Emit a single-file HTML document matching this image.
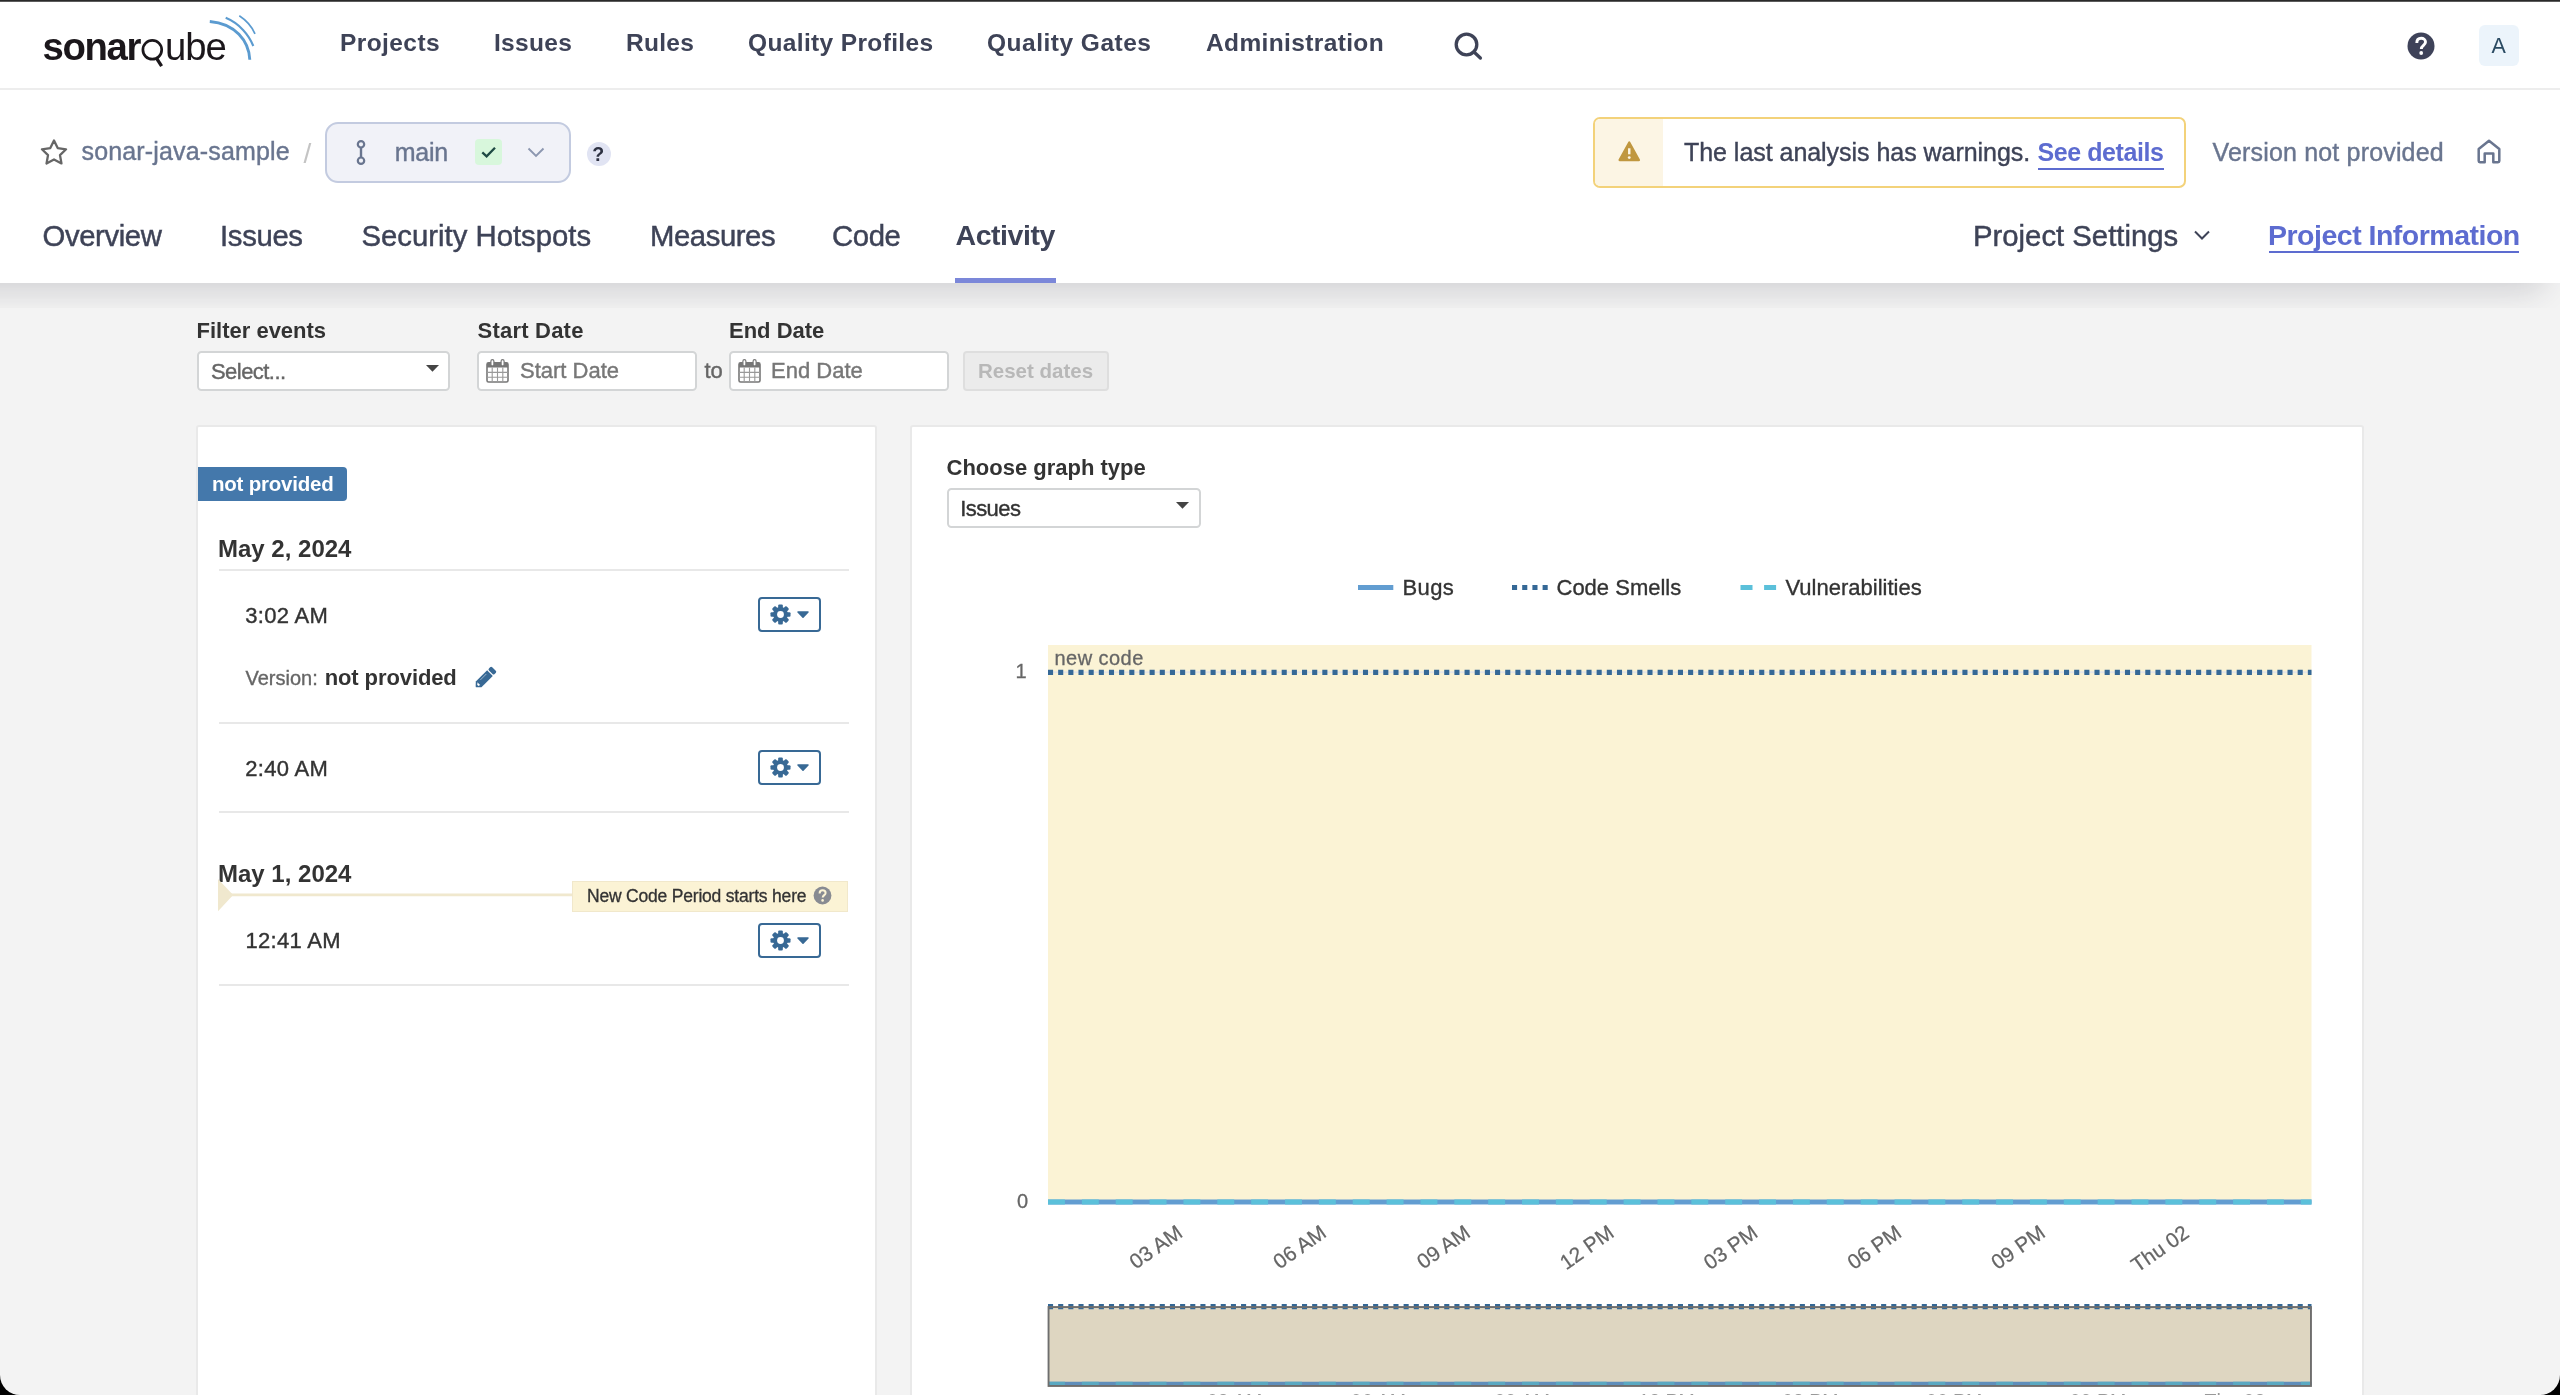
<!DOCTYPE html>
<html lang="en">
<head>
<meta charset="utf-8">
<title>Activity - sonar-java-sample</title>
<style>
*{box-sizing:border-box;margin:0;padding:0}
html{background:#000;width:2560px;height:1395px;overflow:hidden}
body{width:2560px;height:1395px;position:relative;overflow:hidden;background:#f3f3f3;border-radius:0 0 20px 20px;font-family:"Liberation Sans",sans-serif;color:#333;}
.abs{position:absolute;white-space:nowrap;line-height:1}
.t{position:absolute;white-space:nowrap;line-height:1}
/* top chrome line */
#topline{position:absolute;left:0;top:0;width:2560px;height:2px;background:linear-gradient(#2a2a2a 0,#2a2a2a 1px,#8e8e8e 2px);z-index:30}
/* global nav */
#gnav{position:absolute;left:0;top:0;width:2560px;height:88px;background:#fff;z-index:20}
#gnavb{position:absolute;left:0;top:88px;width:2560px;height:2px;background:#ededed;z-index:20}
.nv{font-weight:bold;font-size:24.5px;color:#3e4357;top:30.5px;letter-spacing:.3px}
/* project header */
#phead{position:absolute;left:0;top:90px;width:2560px;height:193px;background:#fff;z-index:10}
#pshadow{position:absolute;left:0;top:283px;width:2560px;height:25px;overflow:hidden;z-index:9}
#pshadow i{position:absolute;left:-60px;top:-60px;width:2599px;height:60px;background:#fff;box-shadow:0 2px 30px 7px rgba(40,40,60,.165);border-radius:0 0 12px 0}
.in{font-size:25px;color:#3e4357;-webkit-text-stroke:.4px}
.tab{font-size:29.3px;color:#3e4357;top:221px;-webkit-text-stroke:.45px}

/* legacy content */
.lbl{font-weight:bold;font-size:22px;color:#333}
.sel{position:absolute;background:#fff;border:2px solid #d3d5d6;border-radius:4.5px}
.tx{font-size:22px;-webkit-text-stroke:.4px}
.panel{position:absolute;background:#fff;border:2px solid #e9e9e9;border-radius:3px}
.hr{position:absolute;height:2px;background:#e8e8e8}
.gbtn{position:absolute;width:63px;height:35px;border:2px solid #386995;border-radius:4px;background:#fff}
.day{font-weight:bold;font-size:24px;color:#333}
</style>
</head>
<body><div id="root" style="position:absolute;left:0;top:0;width:2560px;height:1395px;overflow:hidden;will-change:transform">
<div id="topline"></div>
<div id="gnav">
  <svg class="abs" id="logo" style="left:40px;top:10px" width="222" height="64" viewBox="0 0 222 64">
    <text x="2.6" y="50" font-family="Liberation Sans, sans-serif" font-weight="bold" font-size="38.3" letter-spacing="-1.4" fill="#1b171b">sonar</text>
    <circle cx="112.3" cy="39.8" r="9.4" fill="none" stroke="#1b171b" stroke-width="2.7"/>
    <path d="M116.6 48.4 L121.6 56.2" stroke="#1b171b" stroke-width="3.3" fill="none"/>
    <text x="125" y="50" font-family="Liberation Sans, sans-serif" font-size="38.3" letter-spacing="-1.0" fill="#1b171b">ube</text>
    <path d="M169.8 11.5 C195 13.5 209 31 209.8 49.8" fill="none" stroke="#5b9bd0" stroke-width="2.9"/>
    <path d="M185.7 7.8 C199.5 13.5 209 25 213.3 36" fill="none" stroke="#5b9bd0" stroke-width="2.1"/>
    <path d="M199.3 5.8 C206.5 10.5 212 17 215 23.8" fill="none" stroke="#5b9bd0" stroke-width="1.7"/>
  </svg>
  <span class="t nv" id="n1" style="left:340px;letter-spacing:.42px">Projects</span>
  <span class="t nv" id="n2" style="left:494px">Issues</span>
  <span class="t nv" id="n3" style="left:626px">Rules</span>
  <span class="t nv" id="n4" style="left:748px;letter-spacing:.36px">Quality Profiles</span>
  <span class="t nv" id="n5" style="left:987px;letter-spacing:.5px">Quality Gates</span>
  <span class="t nv" id="n6" style="left:1206px;letter-spacing:.37px">Administration</span>
  <svg class="abs" id="search" style="left:1450px;top:28px" width="36" height="36" viewBox="0 0 36 36"><circle cx="16.5" cy="16.5" r="10.3" fill="none" stroke="#3e4357" stroke-width="3.3"/><path d="M24 24 L30.4 30" stroke="#3e4357" stroke-width="3.3" stroke-linecap="round"/></svg>
  <svg class="abs" id="ghelp" style="left:2407.3px;top:31.6px" width="28" height="28" viewBox="0 0 28 28"><circle cx="14" cy="14" r="13.5" fill="#3e4259"/><path d="M9.8 11 C9.8 7.6 12 6.3 14.2 6.3 C16.6 6.3 18.5 7.8 18.5 10 C18.5 13.3 14.3 13.4 14.3 17" fill="none" stroke="#fff" stroke-width="2.9"/><circle cx="14.2" cy="21" r="1.9" fill="#fff"/></svg>
  <div class="abs" id="avatar" style="left:2479px;top:25px;width:40px;height:41px;border-radius:6px;background:#ecf4fb"></div>
  <span class="t" id="avA" style="left:2491.5px;top:36.3px;font-size:21.5px;color:#2a4a62">A</span>
</div>
<div id="gnavb"></div>

<div id="phead">
  <svg class="abs" id="star" style="left:38px;top:46px" width="32" height="32" viewBox="0 0 32 32"><path d="M16.00 4.50 L19.70 12.10 L28.08 13.28 L21.99 19.15 L23.46 27.47 L16.00 23.50 L8.54 27.47 L10.01 19.15 L3.92 13.28 L12.30 12.10 Z" fill="none" stroke="#666" stroke-width="2.3" stroke-linejoin="round"/></svg>
  <span class="t in" id="pname" style="left:81.5px;top:48.5px;color:#69758f;letter-spacing:.16px">sonar-java-sample</span>
  <span class="t" id="slash" style="left:303.5px;top:49.5px;font-size:28px;color:#c4c4c4">/</span>
  <div class="abs" id="branch" style="left:325px;top:32px;width:246px;height:61px;border:2px solid #c3cbe0;border-radius:13px;background:#f1f2f8"></div>
  <svg class="abs" id="bricon" style="left:353px;top:48px" width="16" height="30" viewBox="0 0 16 30"><circle cx="8" cy="6.3" r="3.2" fill="none" stroke="#69758f" stroke-width="2.2"/><circle cx="8" cy="22.7" r="3.2" fill="none" stroke="#69758f" stroke-width="2.2"/><path d="M8 9.5 V19.5" stroke="#69758f" stroke-width="2.4"/></svg>
  <span class="t in" id="bname" style="left:394.8px;top:49.5px;color:#69758f;letter-spacing:-.3px">main</span>
  <div class="abs" id="qg" style="left:475px;top:49px;width:27px;height:26px;border-radius:4px;background:#d8f7dc"></div>
  <svg class="abs" id="qgc" style="left:475px;top:49px" width="27" height="26" viewBox="0 0 27 26"><path d="M7.3 13.4 L11.6 17.4 L20 8.8" fill="none" stroke="#1f4a44" stroke-width="2.3"/></svg>
  <svg class="abs" id="brchev" style="left:526px;top:55px" width="20" height="14" viewBox="0 0 20 14"><path d="M2.5 3.5 L10 11 L17.5 3.5" fill="none" stroke="#8c97b0" stroke-width="1.9"/></svg>
  <div class="abs" id="bhelp" style="left:586.5px;top:52px;width:24px;height:24px;border-radius:12px;background:#e1e4f3"></div>
  <span class="t" id="bhelpq" style="left:592.3px;top:54.8px;font-size:19.5px;font-weight:bold;color:#2d3142">?</span>

  <div class="abs" id="warn" style="left:1593px;top:27px;width:593px;height:71px;border:2px solid #f3d27a;border-radius:7px;background:#fff;overflow:hidden"><div style="position:absolute;left:0;top:0;width:67.5px;height:67px;background:#fcf5e4"></div></div>
  <svg class="abs" id="warnic" style="left:1616.6px;top:50.4px" width="24.5" height="23.5" viewBox="0 0 26 25"><path d="M13 2.6 L23.3 21.4 H2.7 Z" fill="#c0973f" stroke="#c0973f" stroke-width="2.4" stroke-linejoin="round"/><path d="M13 8.8 V15.2" stroke="#fcf5e4" stroke-width="2.6"/><circle cx="13" cy="18.7" r="1.5" fill="#fcf5e4"/></svg>
  <span class="t in" id="wtext" style="left:1684px;top:49.5px;letter-spacing:-.04px">The last analysis has warnings.</span>
  <span class="t in" id="wlink" style="left:2037.5px;top:49.5px;font-weight:bold;-webkit-text-stroke:0;color:#5d6cd0;letter-spacing:-.42px">See details</span>
  <div class="abs" id="wul" style="left:2038px;top:78px;width:126px;height:2px;background:#5d6cd0"></div>
  <span class="t in" id="ver" style="left:2212.5px;top:49.5px;color:#69758f;letter-spacing:.17px">Version not provided</span>
  <svg class="abs" id="home" style="left:2474px;top:47px" width="30" height="30" viewBox="0 0 30 30"><path d="M4.7 12 L15 3.7 L25.3 12 V24 a1.2 1.2 0 0 1 -1.2 1.2 H19.3 V16.5 H10.7 V25.2 H5.9 a1.2 1.2 0 0 1 -1.2 -1.2 Z" fill="none" stroke="#69758f" stroke-width="2.5" stroke-linejoin="round"/></svg>

  <span class="t tab" id="t1" style="left:42.5px;top:130.5px;letter-spacing:-.4px">Overview</span>
  <span class="t tab" id="t2" style="left:220px;top:130.5px;letter-spacing:-.33px">Issues</span>
  <span class="t tab" id="t3" style="left:361.5px;top:130.5px;letter-spacing:0px">Security Hotspots</span>
  <span class="t tab" id="t4" style="left:650px;top:130.5px;letter-spacing:-.44px">Measures</span>
  <span class="t tab" id="t5" style="left:832px;top:130.5px;letter-spacing:-.38px">Code</span>
  <span class="t tab" id="t6" style="left:955.5px;top:131px;font-weight:bold;-webkit-text-stroke:0;letter-spacing:-.45px;font-size:28.5px">Activity</span>
  <div class="abs" id="tabul" style="left:955px;top:188px;width:101px;height:5px;background:#7b87d9"></div>
  <span class="t tab" id="t7" style="left:1973px;top:130.5px;letter-spacing:0px">Project Settings</span>
  <svg class="abs" id="pschev" style="left:2191.7px;top:138px" width="20" height="14" viewBox="0 0 20 14"><path d="M3 3.5 L10 10.5 L17 3.5" fill="none" stroke="#3e4357" stroke-width="2"/></svg>
  <span class="t tab" id="t8" style="left:2268px;top:131px;font-weight:bold;-webkit-text-stroke:0;color:#5d6cd0;letter-spacing:-.5px;font-size:28.5px">Project Information</span>
  <div class="abs" id="piul" style="left:2269px;top:161px;width:250px;height:2px;background:#5d6cd0"></div>
</div>
<div id="pshadow"><i></i></div>

<div id="content">
  <span class="t lbl" id="l1" style="left:196.5px;top:319.5px">Filter events</span>
  <span class="t lbl" id="l2" style="left:477.5px;top:319.5px;letter-spacing:.22px">Start Date</span>
  <span class="t lbl" id="l3" style="left:729px;top:319.5px">End Date</span>
  <div class="sel" id="s1" style="left:197px;top:351px;width:253px;height:40px"><span class="t tx" id="s1t" style="left:12px;top:8px;color:#666;letter-spacing:-.55px">Select...</span><svg class="abs" style="left:225.6px;top:11.3px" width="15" height="8.4" viewBox="0 0 16 9"><path d="M1 1 H15 L8 8.4 Z" fill="#444"/></svg></div>
  <div class="sel" id="d1" style="left:477px;top:351px;width:220px;height:40px"><svg class="abs" style="left:7px;top:6px" width="23" height="24" viewBox="0 0 23 24"><rect x="1" y="3.8" width="21" height="19.2" rx="1.6" fill="#fff" stroke="#777" stroke-width="1.6"/><path d="M1 5.2 Q1 3.8 2.6 3.8 H20.4 Q22 3.8 22 5.2 V8.6 H1 Z" fill="#777"/><path d="M6.2 8.6 V23 M11.5 8.6 V23 M16.8 8.6 V23 M1 13.4 H22 M1 18.2 H22" stroke="#999" stroke-width="1.1"/><rect x="4.9" y="0.7" width="3" height="6.2" rx="1.5" fill="#fff" stroke="#777" stroke-width="1.2"/><rect x="15.1" y="0.7" width="3" height="6.2" rx="1.5" fill="#fff" stroke="#777" stroke-width="1.2"/></svg><span class="t tx" id="d1t" style="left:41px;top:7px;color:#777">Start Date</span></div>
  <span class="t tx" id="to" style="left:704.5px;top:360px;color:#666">to</span>
  <div class="sel" id="d2" style="left:729px;top:351px;width:220px;height:40px"><svg class="abs" style="left:7px;top:6px" width="23" height="24" viewBox="0 0 23 24"><rect x="1" y="3.8" width="21" height="19.2" rx="1.6" fill="#fff" stroke="#777" stroke-width="1.6"/><path d="M1 5.2 Q1 3.8 2.6 3.8 H20.4 Q22 3.8 22 5.2 V8.6 H1 Z" fill="#777"/><path d="M6.2 8.6 V23 M11.5 8.6 V23 M16.8 8.6 V23 M1 13.4 H22 M1 18.2 H22" stroke="#999" stroke-width="1.1"/><rect x="4.9" y="0.7" width="3" height="6.2" rx="1.5" fill="#fff" stroke="#777" stroke-width="1.2"/><rect x="15.1" y="0.7" width="3" height="6.2" rx="1.5" fill="#fff" stroke="#777" stroke-width="1.2"/></svg><span class="t tx" id="d2t" style="left:40px;top:7px;color:#777">End Date</span></div>
  <div class="abs" id="reset" style="left:963px;top:351px;width:146px;height:40px;border:2px solid #dedede;border-radius:4px;background:#ebebeb"><span class="t" id="resett" style="left:13px;top:7.9px;font-size:20.5px;font-weight:bold;color:#b8b8b8">Reset dates</span></div>

  <div class="panel" id="lp" style="left:196px;top:425px;width:681px;height:1000px">
    <div class="abs" id="badge" style="left:0;top:40px;width:149px;height:34px;background:#4478ab;border-radius:0 4px 4px 0"><span class="t" id="badget" style="left:14px;top:6.7px;letter-spacing:-.22px;font-size:20.5px;font-weight:bold;color:#fff">not provided</span></div>
    <span class="t day" id="day1" style="left:20px;top:109.7px">May 2, 2024</span>
    <div class="hr" style="left:21px;top:141.5px;width:630px"></div>
    <span class="t tx" id="tm1" style="left:47.3px;top:178.2px;letter-spacing:.3px">3:02 AM</span>
    <div class="gbtn" id="g1" style="left:560px;top:170px"><svg class="abs" style="left:10px;top:5.3px" width="21" height="21" viewBox="0 0 22 22"><g fill="#386995"><circle cx="11" cy="11" r="7.75"/><rect x="8.55" y="0.5" width="4.9" height="5.2" rx="1.2" transform="rotate(0 11 11)"/><rect x="8.55" y="0.5" width="4.9" height="5.2" rx="1.2" transform="rotate(45 11 11)"/><rect x="8.55" y="0.5" width="4.9" height="5.2" rx="1.2" transform="rotate(90 11 11)"/><rect x="8.55" y="0.5" width="4.9" height="5.2" rx="1.2" transform="rotate(135 11 11)"/><rect x="8.55" y="0.5" width="4.9" height="5.2" rx="1.2" transform="rotate(180 11 11)"/><rect x="8.55" y="0.5" width="4.9" height="5.2" rx="1.2" transform="rotate(225 11 11)"/><rect x="8.55" y="0.5" width="4.9" height="5.2" rx="1.2" transform="rotate(270 11 11)"/><rect x="8.55" y="0.5" width="4.9" height="5.2" rx="1.2" transform="rotate(315 11 11)"/></g><circle cx="11" cy="11" r="3.55" fill="#fff"/></svg><svg class="abs" style="left:36.3px;top:10.9px" width="14" height="10" viewBox="0 0 14 10"><path d="M2 2 H12 L7 7.3 Z" fill="#386995" stroke="#386995" stroke-width="1.5" stroke-linejoin="round"/></svg></div>
    <span class="t" id="vl" style="left:47.5px;top:241px;font-size:20px;color:#666;-webkit-text-stroke:.35px">Version:</span>
    <span class="t" id="vv" style="left:126.7px;top:239.5px;letter-spacing:-.1px;font-size:22px;font-weight:bold;color:#333">not provided</span>
    <svg class="abs" id="pencil" style="left:275.3px;top:239.4px" width="24" height="24" viewBox="0 0 24 24"><g transform="rotate(45 12 12)"><rect x="8" y="-0.7" width="8" height="4.6" rx="1.5" fill="#386995"/><path d="M8 5 H16 V21 L12.6 24.6 Q12 25.2 11.4 24.6 L8 21 Z" fill="#386995"/><path d="M9.5 20.4 H13.6 L12.9 22.3 H11.2 L10.6 21.3 Z" fill="#fff"/><path d="M10.1 8.2 V16.6" stroke="#fff" stroke-width=".8" opacity=".6"/></g></svg>
    <div class="hr" style="left:21px;top:294.5px;width:630px"></div>
    <span class="t tx" id="tm2" style="left:47.3px;top:331.4px;letter-spacing:.3px">2:40 AM</span>
    <div class="gbtn" id="g2" style="left:560px;top:323px"><svg class="abs" style="left:10px;top:5.3px" width="21" height="21" viewBox="0 0 22 22"><g fill="#386995"><circle cx="11" cy="11" r="7.75"/><rect x="8.55" y="0.5" width="4.9" height="5.2" rx="1.2" transform="rotate(0 11 11)"/><rect x="8.55" y="0.5" width="4.9" height="5.2" rx="1.2" transform="rotate(45 11 11)"/><rect x="8.55" y="0.5" width="4.9" height="5.2" rx="1.2" transform="rotate(90 11 11)"/><rect x="8.55" y="0.5" width="4.9" height="5.2" rx="1.2" transform="rotate(135 11 11)"/><rect x="8.55" y="0.5" width="4.9" height="5.2" rx="1.2" transform="rotate(180 11 11)"/><rect x="8.55" y="0.5" width="4.9" height="5.2" rx="1.2" transform="rotate(225 11 11)"/><rect x="8.55" y="0.5" width="4.9" height="5.2" rx="1.2" transform="rotate(270 11 11)"/><rect x="8.55" y="0.5" width="4.9" height="5.2" rx="1.2" transform="rotate(315 11 11)"/></g><circle cx="11" cy="11" r="3.55" fill="#fff"/></svg><svg class="abs" style="left:36.3px;top:10.9px" width="14" height="10" viewBox="0 0 14 10"><path d="M2 2 H12 L7 7.3 Z" fill="#386995" stroke="#386995" stroke-width="1.5" stroke-linejoin="round"/></svg></div>
    <div class="hr" style="left:21px;top:384px;width:630px"></div>
    <span class="t day" id="day2" style="left:20px;top:434.7px">May 1, 2024</span>
    <svg class="abs" id="ncp" style="left:20.4px;top:452.4px" width="356" height="33" viewBox="0 0 356 33"><path d="M0 0 L15.2 15.9 L0 32.2 Z" fill="#f0e8ce"/><path d="M13 15.9 H356" stroke="#f0e8ce" stroke-width="2.8"/></svg>
    <div class="abs" id="ncpl" style="left:374px;top:454px;width:276px;height:31px;background:#fbf3d5;border:1px solid #f1e8cb"><span class="t" id="ncpt" style="left:14px;top:5.6px;font-size:17.5px;color:#333;-webkit-text-stroke:.3px;letter-spacing:-.2px">New Code Period starts here</span><svg class="abs" style="left:240.2px;top:4.3px" width="19" height="19" viewBox="0 0 19 19"><circle cx="9.5" cy="9.5" r="8.9" fill="#888b92"/><path d="M6.6 7.5 C6.6 5.2 8.1 4.3 9.6 4.3 C11.3 4.3 12.6 5.3 12.6 6.9 C12.6 9.1 9.7 9.2 9.7 11.6" fill="none" stroke="#fbf3d5" stroke-width="2"/><circle cx="9.6" cy="14.4" r="1.3" fill="#fbf3d5"/></svg></div>
    <span class="t tx" id="tm3" style="left:47.5px;top:503.4px;letter-spacing:.3px">12:41 AM</span>
    <div class="gbtn" id="g3" style="left:560px;top:496px"><svg class="abs" style="left:10px;top:5.3px" width="21" height="21" viewBox="0 0 22 22"><g fill="#386995"><circle cx="11" cy="11" r="7.75"/><rect x="8.55" y="0.5" width="4.9" height="5.2" rx="1.2" transform="rotate(0 11 11)"/><rect x="8.55" y="0.5" width="4.9" height="5.2" rx="1.2" transform="rotate(45 11 11)"/><rect x="8.55" y="0.5" width="4.9" height="5.2" rx="1.2" transform="rotate(90 11 11)"/><rect x="8.55" y="0.5" width="4.9" height="5.2" rx="1.2" transform="rotate(135 11 11)"/><rect x="8.55" y="0.5" width="4.9" height="5.2" rx="1.2" transform="rotate(180 11 11)"/><rect x="8.55" y="0.5" width="4.9" height="5.2" rx="1.2" transform="rotate(225 11 11)"/><rect x="8.55" y="0.5" width="4.9" height="5.2" rx="1.2" transform="rotate(270 11 11)"/><rect x="8.55" y="0.5" width="4.9" height="5.2" rx="1.2" transform="rotate(315 11 11)"/></g><circle cx="11" cy="11" r="3.55" fill="#fff"/></svg><svg class="abs" style="left:36.3px;top:10.9px" width="14" height="10" viewBox="0 0 14 10"><path d="M2 2 H12 L7 7.3 Z" fill="#386995" stroke="#386995" stroke-width="1.5" stroke-linejoin="round"/></svg></div>
    <div class="hr" style="left:21px;top:557px;width:630px"></div>
  </div>

  <div class="panel" id="rp" style="left:910px;top:425px;width:1454px;height:1000px">
    <span class="t lbl" id="cg" style="left:34.5px;top:29.5px">Choose graph type</span>
    <div class="sel" id="s2" style="left:35px;top:61px;width:254px;height:40px"><span class="t tx" id="s2t" style="left:11.3px;top:8px;color:#333;letter-spacing:-.6px">Issues</span><svg class="abs" style="left:226.4px;top:11.2px" width="15" height="8.4" viewBox="0 0 16 9"><path d="M1 1 H15 L8 8.4 Z" fill="#444"/></svg></div>
  </div>
</div>

<svg class="abs" id="chart" style="left:0;top:0;z-index:5" width="2560" height="1395" viewBox="0 0 2560 1395" font-family="Liberation Sans, sans-serif">
  <!-- legend -->
  <rect x="1358" y="585" width="35.3" height="5" fill="#629dd1"/>
  <path d="M1512 587.5 H1548" stroke="#356896" stroke-width="5" stroke-dasharray="5.1 5.1"/>
  <path d="M1740.5 587.5 H1776.2" stroke="#5bc0da" stroke-width="5" stroke-dasharray="12 11.6"/>
  <g font-size="22" fill="#333" stroke="#333" stroke-width=".35"><text id="lg1" x="1402.5" y="594.5" letter-spacing=".4">Bugs</text><text id="lg2" x="1556.5" y="594.5">Code Smells</text><text id="lg3" x="1785.5" y="594.5">Vulnerabilities</text></g>
  <!-- plot -->
  <rect x="1048" y="645" width="1263.5" height="555" fill="#fbf3d5"/>
  <path d="M1048 672.3 H2311.5 M1048 1202 H2311.5" stroke="#e6e6e6" stroke-width="2"/>
  <text id="nc" x="1054.5" y="665.2" font-size="20" fill="#666" stroke="#666" stroke-width=".3" letter-spacing=".45">new code</text>
  <path d="M1048 672.3 H2311.5" stroke="#356896" stroke-width="5.2" stroke-dasharray="5.08 5.08"/>
  <path d="M1048 1202 H2311.5" stroke="#629dd1" stroke-width="5.2"/>
  <path d="M1048 1202 H2311.5" stroke="#5bc0da" stroke-width="5.2" stroke-dasharray="16.93 16.93"/>
  <g font-size="20" fill="#666" stroke="#666" stroke-width=".3" text-anchor="end"><text id="y1" x="1026.6" y="677.8">1</text><text id="y0" x="1028" y="1208">0</text></g>
  <g font-size="20.8" fill="#666" stroke="#666" stroke-width=".25" id="xl"><text x="1184.0" y="1235.9" text-anchor="end" transform="rotate(-35 1184.0 1235.9)">03 AM</text><text x="1327.8" y="1235.9" text-anchor="end" transform="rotate(-35 1327.8 1235.9)">06 AM</text><text x="1471.6" y="1235.9" text-anchor="end" transform="rotate(-35 1471.6 1235.9)">09 AM</text><text x="1615.4" y="1235.9" text-anchor="end" transform="rotate(-35 1615.4 1235.9)">12 PM</text><text x="1759.2" y="1235.9" text-anchor="end" transform="rotate(-35 1759.2 1235.9)">03 PM</text><text x="1903.0" y="1235.9" text-anchor="end" transform="rotate(-35 1903.0 1235.9)">06 PM</text><text x="2046.8" y="1235.9" text-anchor="end" transform="rotate(-35 2046.8 1235.9)">09 PM</text><text x="2190.6" y="1235.9" text-anchor="end" transform="rotate(-35 2190.6 1235.9)">Thu 02</text></g>
  <!-- zoom brush -->
  <rect x="1048" y="1307" width="1263.5" height="80" fill="#ded6c1"/>
  <path d="M1048 1383.8 H2311.5" stroke="#5f8ebb" stroke-width="4"/>
  <path d="M1048 1383.8 H2311.5" stroke="#5aa9c2" stroke-width="4" stroke-dasharray="16.93 16.93"/>
  <path d="M1048 1306.7 H2311.5" stroke="#356896" stroke-width="5.2" stroke-dasharray="5.08 5.08"/>
  <rect x="1048.55" y="1307.05" width="1262.4" height="78.9" fill="none" stroke="#6e6e6e" stroke-width="1.9"/>
  <g font-size="19.5" fill="#999"><text x="1207.0" y="1407.6">03 AM</text><text x="1350.8" y="1407.6">06 AM</text><text x="1494.6" y="1407.6">09 AM</text><text x="1638.4" y="1407.6">12 PM</text><text x="1782.2" y="1407.6">03 PM</text><text x="1926.0" y="1407.6">06 PM</text><text x="2069.8" y="1407.6">09 PM</text><text x="2204.6" y="1407.6">Thu 02</text></g>
</svg>
</div></body>
</html>
